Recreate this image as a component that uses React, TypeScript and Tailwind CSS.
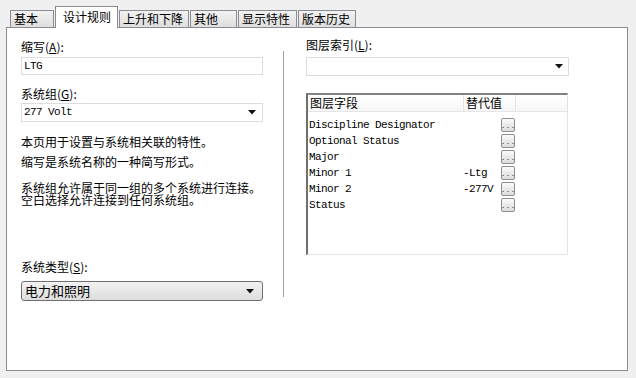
import React from 'react';

const cjk = { fontFamily: '"Noto Sans CJK SC", "Noto Sans", sans-serif' };
const mono = { fontFamily: '"Liberation Mono", "DejaVu Sans Mono", monospace' };

const tabs = [
  { label: '基本', w: 'w-[44px]' },
  { label: '设计规则', w: 'w-[63px]', active: true },
  { label: '上升和下降', w: 'w-[70px]' },
  { label: '其他', w: 'w-[47px]' },
  { label: '显示特性', w: 'w-[59px]' },
  { label: '版本历史', w: 'w-[58px]' },
];

const rows = [
  { field: 'Discipline Designator', value: '' },
  { field: 'Optional Status', value: '' },
  { field: 'Major', value: '' },
  { field: 'Minor 1', value: '-Ltg' },
  { field: 'Minor 2', value: '-277V' },
  { field: 'Status', value: '' },
];

function Arrow() {
  return (
    <svg width="8" height="5" viewBox="0 0 8 5" className="shrink-0">
      <path d="M0 0 H8 L4 4.5 Z" fill="#111" />
    </svg>
  );
}

function Label({ text, mnemonic }: { text: string; mnemonic: string }) {
  return (
    <div className="h-[16px] leading-[16px] text-[12px] text-black whitespace-nowrap" style={cjk}>
      {text}(<span className="underline">{mnemonic}</span>):
    </div>
  );
}

function DotsButton() {
  return (
    <div className="w-[14px] h-[14px] rounded-[2px] border border-[#8f8f8f] bg-gradient-to-b from-[#fafafa] to-[#dcdcdc] flex items-end justify-center pb-[2px]">
      <span className="text-[8px] leading-[6px] text-[#333]" style={mono}>...</span>
    </div>
  );
}

export default function App() {
  return (
    <div className="w-[636px] h-[378px] bg-[#f0f0f0] overflow-hidden" style={cjk}>
      <div className="flex items-end h-[27px] pl-[10px] gap-px">
        {tabs.map((t) =>
          t.active ? (
            <div
              key={t.label}
              className={`${t.w} h-[22px] -mb-px relative z-10 bg-white border border-b-0 border-[#898c95] pl-[7px] pt-[2px] text-[12px] leading-[16px] text-black whitespace-nowrap`}
            >
              {t.label}
            </div>
          ) : (
            <div
              key={t.label}
              className={`${t.w} h-[17px] bg-gradient-to-b from-[#f2f2f2] to-[#dedede] border border-b-0 border-[#898c95] pl-[3px] text-[12px] leading-[16px] text-black whitespace-nowrap`}
            >
              {t.label}
            </div>
          )
        )}
      </div>

      <div className="mx-[6px] w-[622px] h-[344px] bg-white border border-[#898c95] flex">
        {/* left column */}
        <div className="w-[256px] pl-[14px] pt-[11px] flex flex-col">
          <Label text="缩写" mnemonic="A" />
          <div className="mt-[2px] w-[242px] h-[18px] border border-[#dcdcdc] flex items-center px-[2px]">
            <span className="text-[11px] tracking-[-0.6px] text-black" style={mono}>LTG</span>
          </div>
          <div className="mt-[11px]">
            <Label text="系统组" mnemonic="G" />
          </div>
          <div className="mt-[1px] w-[242px] h-[19px] border border-[#dcdcdc] flex items-center justify-between pl-[2px] pr-[6px]">
            <span className="text-[11px] tracking-[-0.6px] text-black" style={mono}>277 Volt</span>
            <Arrow />
          </div>
          <p className="mt-[12px] text-[12px] leading-[16px] text-black">本页用于设置与系统相关联的特性。</p>
          <p className="mt-[4px] text-[12px] leading-[16px] text-black">缩写是系统名称的一种简写形式。</p>
          <div className="mt-[12px] flex flex-col text-[12px] text-black">
            <span className="h-[12px] leading-[12px]">系统组允许属于同一组的多个系统进行连接。</span>
            <span className="h-[12px] leading-[12px]">空白选择允许连接到任何系统组。</span>
          </div>
          <div className="mt-[53px]">
            <Label text="系统类型" mnemonic="S" />
          </div>
          <div className="mt-[6px] w-[242px] h-[20px] rounded-[3px] border border-[#707070] bg-gradient-to-b from-[#f2f2f2] to-[#dddddd] flex items-center justify-between pl-[3px] pr-[8px]">
            <span className="text-[13px] leading-[16px] text-black">电力和照明</span>
            <Arrow />
          </div>
        </div>

        {/* separator */}
        <div className="w-px h-[246px] mt-[23px] bg-[#a0a0a0] ml-[20px]" />

        {/* right column */}
        <div className="ml-[22px] pt-[9px] flex flex-col">
          <Label text="图层索引" mnemonic="L" />
          <div className="mt-[4px] w-[263px] h-[19px] border border-[#dcdcdc] flex items-center justify-end pr-[5px]">
            <Arrow />
          </div>
          <div className="mt-[17px] w-[262px] h-[162px] border-t-2 border-l-2 border-t-[#828282] border-l-[#6e6e6e] border-r border-b border-r-[#e3e3e3] border-b-[#e3e3e3] flex flex-col">
            <div className="h-[17px] flex border-b border-[#e5e5e5] bg-gradient-to-b from-white to-[#f7f7f7] text-[12px] leading-[16px] text-black">
              <div className="w-[156px] pl-[2px] border-r border-[#e5e5e5]">图层字段</div>
              <div className="w-[52px] pl-[2px] border-r border-[#e5e5e5]">替代值</div>
              <div className="flex-1" />
            </div>
            <div className="pt-[5px] flex flex-col">
              {rows.map((r) => (
                <div key={r.field} className="h-[16px] flex items-center">
                  <div className="w-[155px] pl-[1px] text-[11px] tracking-[-0.6px] text-black whitespace-nowrap" style={mono}>
                    {r.field}
                  </div>
                  <div className="w-[38px] text-[11px] tracking-[-0.6px] text-black whitespace-nowrap" style={mono}>
                    {r.value}
                  </div>
                  <DotsButton />
                </div>
              ))}
            </div>
          </div>
        </div>
      </div>
    </div>
  );
}
